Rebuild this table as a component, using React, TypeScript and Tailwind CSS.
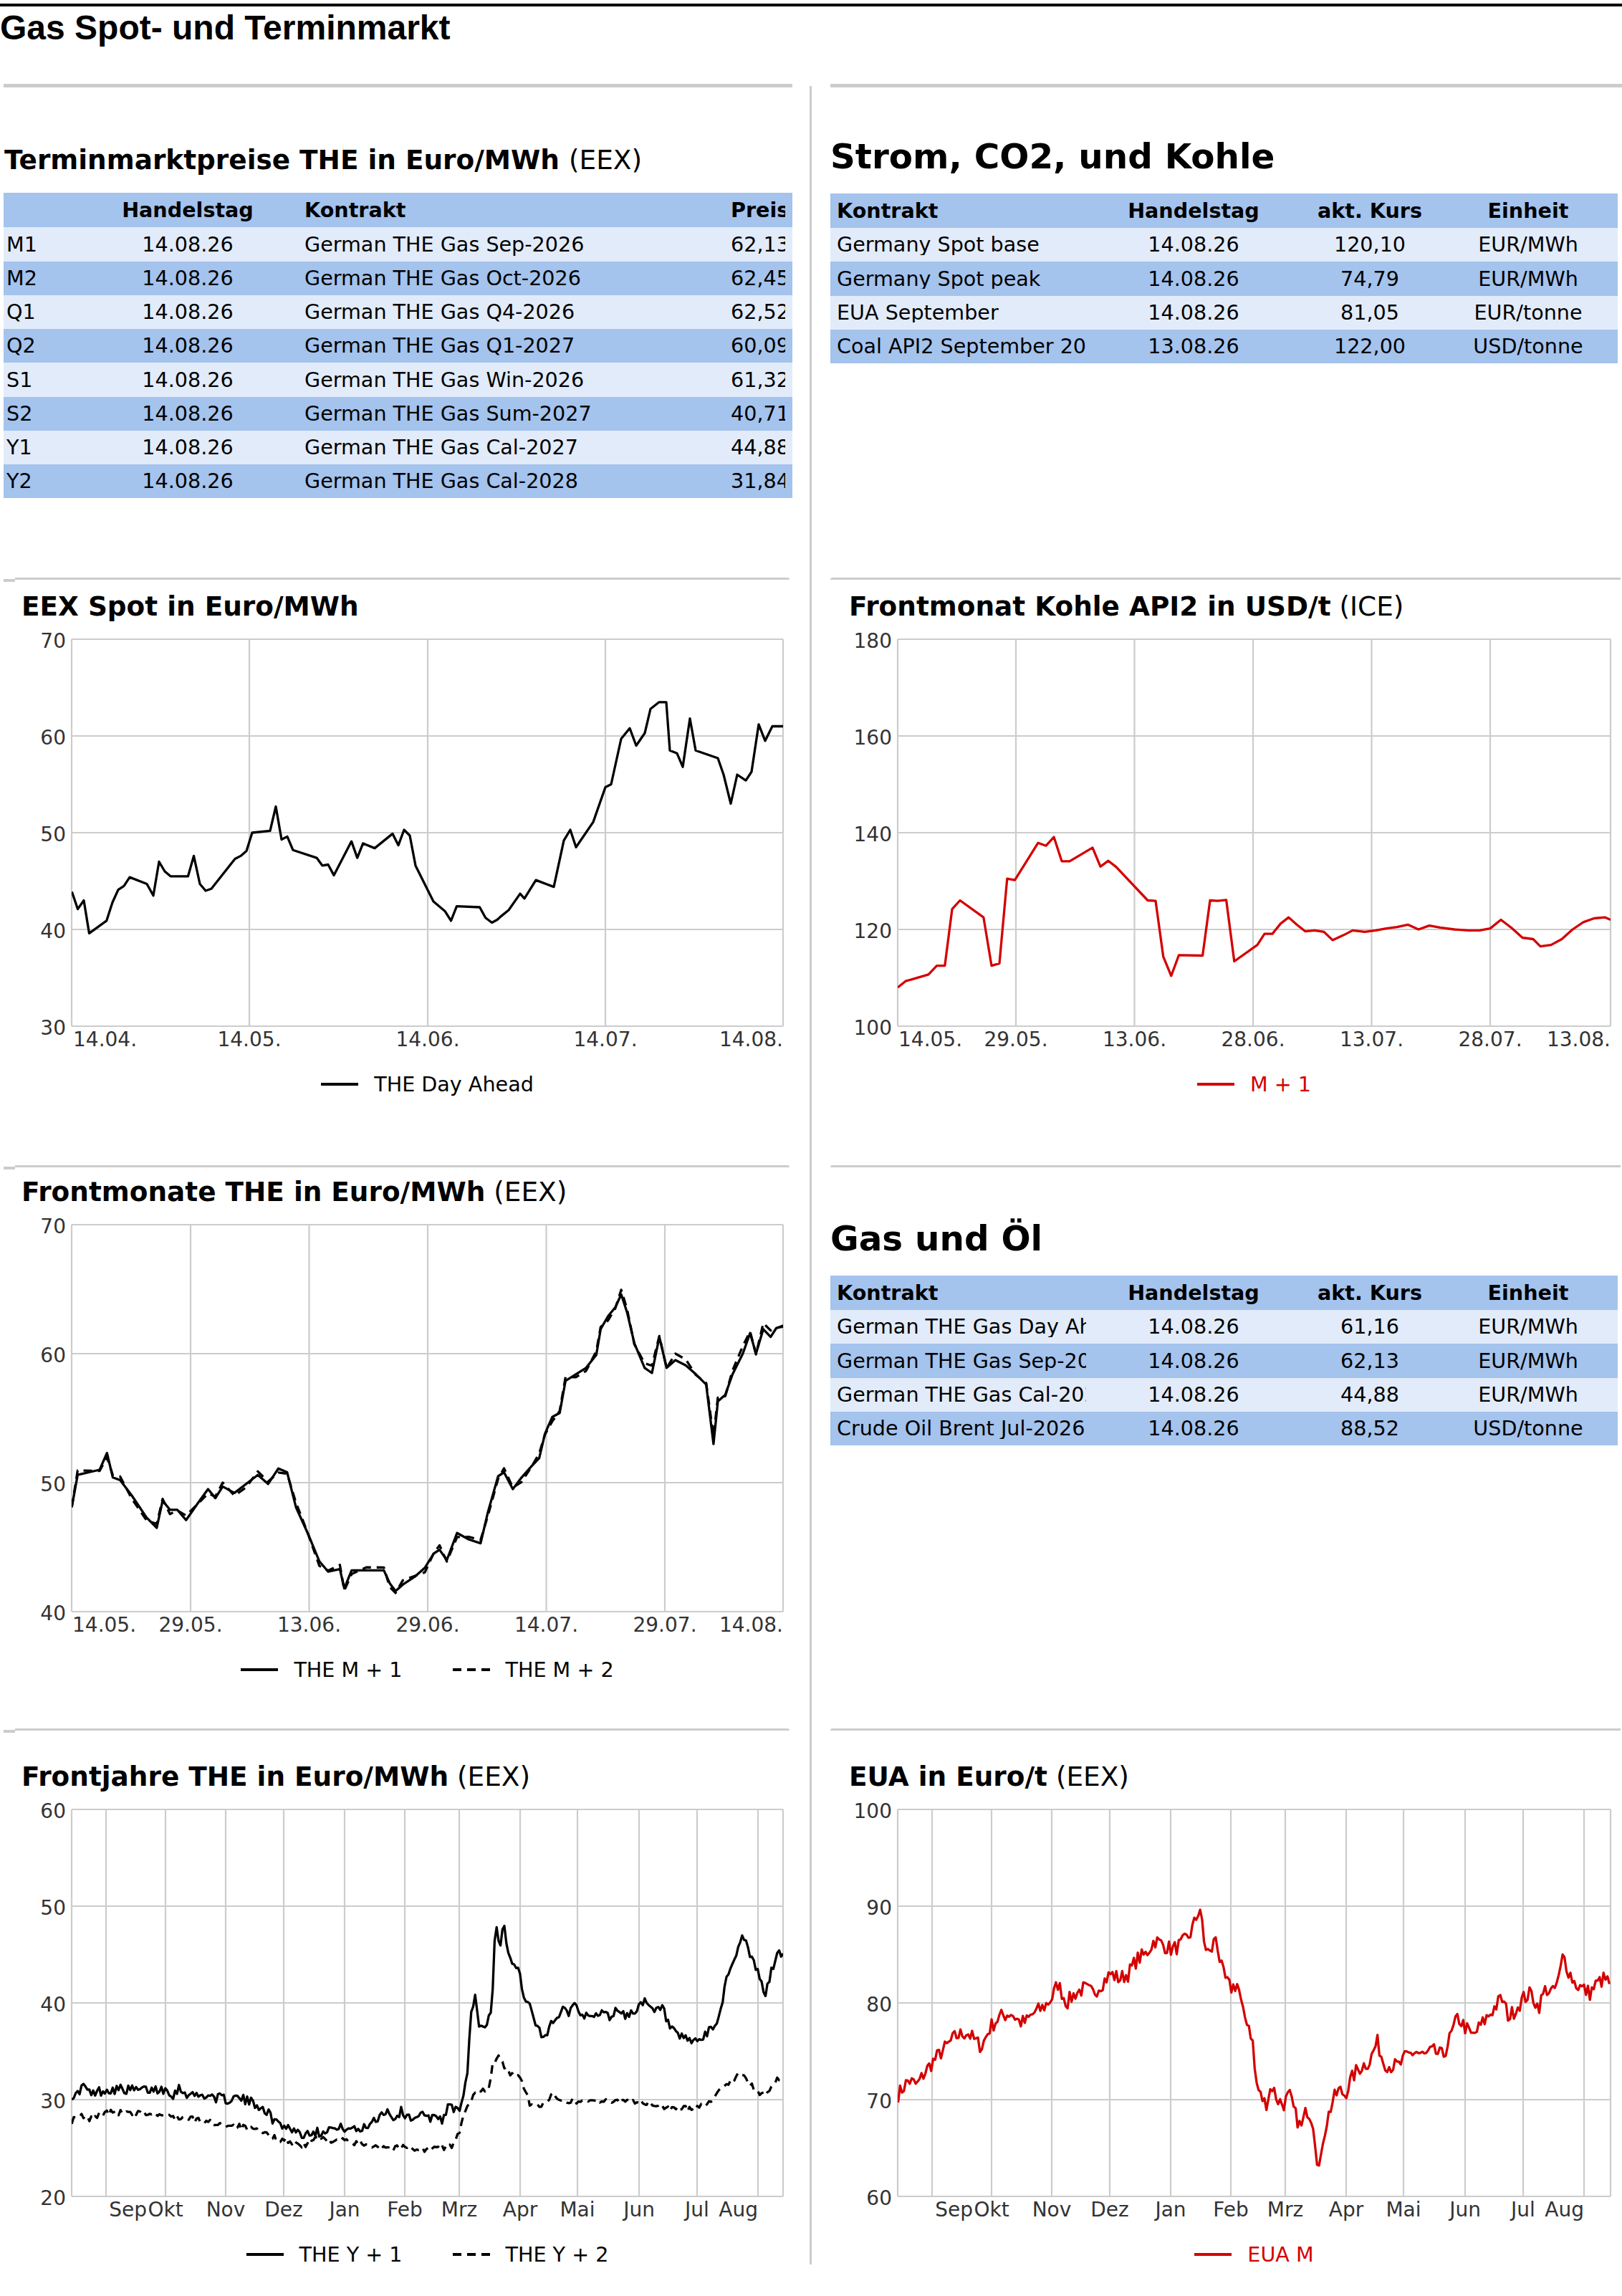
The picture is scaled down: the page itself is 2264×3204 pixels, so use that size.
import React from 'react'

type Pt = [number, number]
type Series = { pts: Pt[]; color: string; dash?: string }
type Label = { x: number; t: string; a: 'start' | 'middle' | 'end' }

const RED = '#d40000'
const S = 2.045 // reading scale of the source sketch

const fromSketch = (arr: Pt[]): Pt[] => arr.map(([x, v]) => [x * S, v])

// interpolate key points to daily values and add a bit of deterministic noise
function dense(keys: Pt[], step: number, amp: number, seed: number): Pt[] {
  let s = seed
  const rnd = () => {
    s = (s * 16807) % 2147483647
    return s / 2147483647 - 0.5
  }
  const out: Pt[] = []
  const x0 = keys[0][0]
  const x1 = keys[keys.length - 1][0]
  let i = 0
  for (let x = x0; x <= x1 + 0.01; x += step) {
    while (i < keys.length - 2 && keys[i + 1][0] < x) i++
    const [ax, av] = keys[i]
    const [bx, bv] = keys[i + 1]
    const t = Math.min(1, Math.max(0, (x - ax) / (bx - ax)))
    out.push([x, av + (bv - av) * t + rnd() * amp])
  }
  return out
}

const spot: Pt[] = [
  [100.4, 43.9], [108.5, 42.1], [117, 43.0], [124.5, 39.6], [148.7, 40.9], [157, 42.8], [165, 44.1], [173, 44.5],
  [181, 45.4], [205, 44.7], [214, 43.5], [222, 47.0], [230, 46.0], [238, 45.5], [262.5, 45.5], [270.5, 47.6],
  [279, 44.7], [287, 44.0], [295, 44.2], [328, 47.3], [336, 47.6], [344, 48.1], [352, 50.0], [377, 50.2],
  [385, 52.7], [393, 49.3], [401, 49.6], [409, 48.2], [442, 47.4], [450, 46.6], [458, 46.7], [466, 45.6],
  [490.6, 49.1], [498.7, 47.4], [506.7, 48.9], [523, 48.4], [548, 49.9], [556, 48.7], [564, 50.3], [572, 49.7],
  [580, 46.6], [605, 42.9], [621, 41.9], [629.5, 40.9], [637.5, 42.4], [669.6, 42.3], [677.7, 41.2], [686.6, 40.7],
  [694, 41.0], [700, 41.4], [710, 42.0], [726, 43.7], [732, 43.2], [748, 45.1], [773, 44.4], [787, 49.2],
  [796, 50.3], [804, 48.5], [828, 51.1], [845, 54.7], [853, 55.0], [867, 59.7], [879, 60.8], [888, 59.0],
  [900, 60.3], [908, 62.8], [920, 63.5], [930, 63.5], [935, 58.5], [945, 58.2], [953, 56.8], [963, 61.8],
  [971, 58.5], [1002, 57.7], [1010, 56.0], [1020, 53.0], [1029, 56.0], [1041, 55.4], [1049, 56.3], [1059, 61.2],
  [1068, 59.5], [1078, 61.0], [1093, 61.0],
]

const coal: Pt[] = [
  [1253, 108.0], [1264, 109.3], [1296, 110.7], [1307.6, 112.5], [1318.8, 112.5], [1329, 124.2], [1340, 126.0],
  [1372.8, 122.5], [1384, 112.5], [1395, 113.0], [1405.8, 130.5], [1416.5, 130.2], [1449, 137.9], [1460, 137.3],
  [1471, 139.1], [1482, 134.1], [1493, 134.1], [1525, 136.9], [1536, 133.0], [1547, 134.2], [1558, 132.9],
  [1602, 126.0], [1613, 125.9], [1623.7, 114.4], [1634.8, 110.4], [1645.5, 114.7], [1678.6, 114.6], [1689, 126.0],
  [1700, 125.9], [1711.6, 126.1], [1722.8, 113.4], [1755, 116.8], [1765, 119.1], [1776, 119.1], [1787.5, 121.2],
  [1798.7, 122.5], [1810, 121.0], [1822, 119.6], [1835, 119.8], [1848, 119.5], [1860, 117.8], [1875, 118.8],
  [1888, 119.8], [1905, 119.5], [1920, 119.8], [1935, 120.2], [1950, 120.5], [1965, 121.0], [1980, 120.0],
  [1995, 120.8], [2010, 120.4], [2030, 120.0], [2050, 119.8], [2065, 119.8], [2080, 120.2], [2095, 122.0],
  [2110, 120.3], [2125, 118.3], [2140, 118.0], [2150, 116.5], [2165, 116.8], [2180, 118.0], [2195, 120.0],
  [2210, 121.5], [2225, 122.3], [2240, 122.5], [2248, 122.0],
]

const m1: Pt[] = fromSketch([
  [49, 48.1], [53, 50.6], [68, 51.0], [73, 52.3], [77, 50.4], [82, 50.2], [90, 49.0], [100, 47.3], [107, 46.5],
  [111, 48.6], [116, 47.9], [121, 47.9], [127, 47.1], [135, 48.4], [142, 49.5], [147, 48.8], [152, 49.7],
  [160, 49.2], [168, 49.9], [176, 50.6], [183, 49.9], [190, 51.1], [196, 50.8], [202, 48.1], [210, 46.1],
  [218, 43.9], [224, 43.1], [232, 43.3], [235, 41.8], [240, 43.2], [250, 43.2], [262, 43.2], [266, 42.2],
  [270, 41.6], [275, 42.1], [283, 42.7], [290, 43.4], [296, 44.5], [300, 44.8], [305, 44.0], [312, 46.1],
  [320, 45.6], [328, 45.3], [333, 47.7], [340, 50.5], [344, 50.8], [350, 49.5], [356, 50.4], [363, 51.3],
  [368, 51.9], [372, 53.8], [377, 55.1], [382, 55.4], [386, 57.9], [393, 58.4], [400, 58.9], [407, 59.9],
  [410, 61.9], [415, 62.9], [420, 63.6], [424, 64.6], [428, 63.2], [433, 60.8], [440, 58.9], [445, 58.5],
  [450, 61.3], [455, 58.9], [461, 59.5], [468, 59.1], [475, 58.4], [482, 57.6], [487, 53.0], [490, 56.3],
  [495, 56.8], [500, 58.4], [507, 60.0], [512, 61.6], [516, 60.0], [521, 61.9], [526, 61.3], [530, 62.0],
  [534.5, 62.1],
])
const m2: Pt[] = m1.map(([x, v], i) => [x, v + 0.35 * Math.sin(i * 1.7) + (i > 60 ? 0.25 : 0)])

const y1 = dense(fromSketch([
  [49, 30.5], [52, 30.3], [55, 31.2], [58, 31.4], [62, 30.4], [65, 30.8], [72, 31.0], [80, 31.1], [90, 31.0],
  [100, 31.0], [110, 31.1], [115, 31.0], [118, 30.5], [122, 31.2], [128, 30.6], [135, 30.4], [140, 30.5],
  [148, 30.2], [155, 30.0], [162, 30.2], [170, 29.8], [176, 29.5], [181, 29.0], [186, 28.0], [190, 27.6],
  [196, 27.2], [202, 26.8], [207, 26.3], [212, 26.8], [218, 26.6], [224, 27.1], [230, 26.9], [236, 27.2],
  [242, 26.8], [248, 27.0], [254, 27.8], [258, 28.2], [264, 29.0], [268, 28.0], [274, 28.8], [280, 28.1],
  [286, 28.5], [292, 28.0], [297, 28.4], [302, 28.0], [306, 29.2], [311, 29.0], [316, 29.6], [319, 33.0],
  [321, 38.0], [324, 41.0], [326, 38.5], [329, 37.0], [333, 38.0], [336, 40.0], [338, 48.5], [341, 46.0],
  [344, 47.8], [347, 45.5], [350, 44.0], [354, 43.5], [358, 40.5], [362, 39.5], [365, 38.0], [368, 37.0],
  [371, 36.0], [375, 37.5], [379, 38.0], [384, 40.0], [388, 39.0], [393, 40.2], [398, 38.5], [404, 38.5],
  [410, 39.2], [416, 38.5], [422, 39.5], [428, 38.5], [434, 39.5], [440, 40.0], [446, 39.0], [452, 39.5],
  [457, 37.5], [462, 36.5], [468, 36.2], [475, 36.0], [481, 36.5], [487, 37.5], [491, 38.5], [495, 42.0],
  [499, 44.0], [503, 45.0], [507, 47.5], [511, 45.0], [515, 44.0], [519, 42.5], [522, 40.5], [526, 43.0],
  [530, 45.0], [534.5, 45.0],
]), 2.72, 1.0, 17)

const y2 = dense(fromSketch([
  [49, 27.8], [55, 28.3], [62, 28.0], [70, 28.6], [80, 28.7], [90, 28.5], [100, 28.6], [110, 28.4], [120, 28.2],
  [130, 28.0], [140, 27.7], [150, 27.5], [160, 27.3], [170, 27.0], [180, 26.5], [188, 26.0], [196, 25.8],
  [204, 25.4], [210, 25.2], [216, 26.2], [222, 25.8], [230, 25.9], [240, 25.5], [250, 25.4], [260, 25.2],
  [270, 25.0], [280, 25.1], [290, 24.8], [300, 25.0], [308, 25.2], [312, 26.0], [316, 28.0], [320, 29.5],
  [324, 30.5], [330, 31.0], [334, 31.5], [336, 33.5], [340, 34.5], [344, 33.5], [348, 32.5], [353, 32.8],
  [358, 31.0], [362, 29.5], [366, 29.2], [372, 29.8], [378, 30.5], [385, 30.0], [395, 29.8], [405, 30.0],
  [415, 29.7], [425, 30.0], [435, 29.8], [445, 29.5], [455, 29.2], [465, 29.0], [475, 29.2], [482, 29.6],
  [488, 30.3], [494, 31.5], [500, 32.0], [505, 32.8], [510, 31.8], [515, 31.2], [520, 30.5], [525, 31.0],
  [530, 32.0], [534.5, 32.0],
]), 2.72, 0.6, 91)

const eua = dense(fromSketch([
  [613, 70.5], [620, 72], [626, 71.5], [632, 73], [640, 74.5], [646, 75.5], [652, 76.5], [660, 77], [666, 76],
  [670, 75.5], [676, 77.5], [682, 78.5], [690, 79], [696, 78], [700, 78], [706, 79], [712, 79.5], [718, 80.5],
  [722, 82], [728, 80], [734, 81], [740, 81.5], [746, 81], [752, 82], [758, 83], [764, 82.5], [770, 83],
  [776, 84.5], [782, 85], [788, 86.5], [794, 86], [800, 85.5], [806, 86], [812, 87], [816, 88.5], [819, 90],
  [822, 86], [826, 85], [830, 87], [833, 84], [836, 82.5], [840, 81.5], [845, 82], [848, 79], [852, 78],
  [855, 76], [857, 72], [860, 70.5], [864, 69.5], [868, 71.5], [872, 70], [876, 69.5], [880, 70.5], [884, 68.5],
  [888, 67], [892, 69], [896, 68], [899, 64], [901, 62.5], [903, 66], [906, 68], [910, 70], [914, 71],
  [918, 70.5], [922, 72], [926, 73], [930, 73.5], [935, 74], [940, 76], [944, 74], [948, 73.5], [955, 73.5],
  [960, 74.5], [966, 75], [972, 74.5], [978, 75], [985, 74.5], [990, 76.5], [995, 78.5], [1000, 77.5],
  [1005, 76.5], [1010, 77.5], [1015, 78.5], [1020, 79.5], [1025, 80.5], [1030, 78.5], [1035, 79.5],
  [1040, 80.5], [1045, 81], [1050, 79.5], [1055, 81.5], [1060, 81], [1064, 82.5], [1067, 85], [1070, 83.5],
  [1075, 82], [1080, 81.5], [1085, 81], [1090, 82], [1095, 82.5], [1099, 82],
]), 2.72, 1.6, 7)

const monthGrid = [148, 231, 315, 396, 481, 565, 641, 726, 806, 892, 973, 1058]
const monthLabels = (dx: number): Label[] => [
  { x: 205 + dx, t: 'Sep', a: 'end' },
  { x: 231 + dx, t: 'Okt', a: 'middle' },
  { x: 315 + dx, t: 'Nov', a: 'middle' },
  { x: 396 + dx, t: 'Dez', a: 'middle' },
  { x: 481 + dx, t: 'Jan', a: 'middle' },
  { x: 565 + dx, t: 'Feb', a: 'middle' },
  { x: 641 + dx, t: 'Mrz', a: 'middle' },
  { x: 726 + dx, t: 'Apr', a: 'middle' },
  { x: 806 + dx, t: 'Mai', a: 'middle' },
  { x: 892 + dx, t: 'Jun', a: 'middle' },
  { x: 973 + dx, t: 'Jul', a: 'middle' },
  { x: 1058 + dx, t: 'Aug', a: 'end' },
]

function Chart({
  id, x0, w, left, right, min, max, ticks, grid, labels, series,
}: {
  id: string
  x0: number
  w: number
  left: number
  right: number
  min: number
  max: number
  ticks: number[]
  grid: number[]
  labels: Label[]
  series: Series[]
}) {
  const y = (v: number) => 20 + ((max - v) / (max - min)) * 540
  return (
    <svg width={w} height={605} viewBox={`${x0} 0 ${w} 605`} className="mt-[6.3px] block">
      <defs>
        <clipPath id={id}>
          <rect x={left} y={18} width={right - left} height={544} />
        </clipPath>
      </defs>
      {ticks.map((t) => (
        <line key={`h${t}`} x1={left} x2={right} y1={y(t)} y2={y(t)} stroke="#cccccc" strokeWidth={2.2} />
      ))}
      {grid.map((g) => (
        <line key={`v${g}`} x1={g} x2={g} y1={20} y2={560} stroke="#cccccc" strokeWidth={2.2} />
      ))}
      <line x1={left} x2={left} y1={20} y2={560} stroke="#cccccc" strokeWidth={2.2} />
      <line x1={right} x2={right} y1={20} y2={560} stroke="#cccccc" strokeWidth={2.2} />
      {ticks.map((t) => (
        <text key={`t${t}`} x={left - 8} y={y(t) + 12} textAnchor="end" fontSize={28} fill="#333333">
          {t}
        </text>
      ))}
      {labels.map((l) => (
        <text key={l.t} x={l.x} y={588} textAnchor={l.a} fontSize={28} fill="#333333">
          {l.t}
        </text>
      ))}
      <g clipPath={`url(#${id})`}>
        {series.map((s, i) => (
          <polyline
            key={i}
            points={s.pts.map(([px, v]) => `${px.toFixed(1)},${y(v).toFixed(1)}`).join(' ')}
            fill="none"
            stroke={s.color}
            strokeWidth={3.3}
            strokeDasharray={s.dash}
            strokeLinejoin="round"
          />
        ))}
      </g>
    </svg>
  )
}

function ChartTitle({ bold, normal, className }: { bold: string; normal?: string; className: string }) {
  return (
    <h3 className={`whitespace-nowrap text-[37.4px] font-bold leading-none ${className}`}>
      {bold}
      {normal && <span className="font-normal"> {normal}</span>}
    </h3>
  )
}

function Legend({
  items,
  className,
}: {
  items: { label: string; color: string; dash?: boolean; red?: boolean }[]
  className: string
}) {
  return (
    <div className={`mt-[22px] flex h-[28.6px] items-center justify-center gap-[70px] text-[28.6px] leading-none ${className}`}>
      {items.map((it) => (
        <div key={it.label} className="flex items-center gap-[22px]">
          <svg width="52" height="6" className="block">
            <line x1="0" x2="52" y1="3" y2="3" stroke={it.color} strokeWidth="4" strokeDasharray={it.dash ? '12 8' : undefined} />
          </svg>
          <span className={it.red ? 'text-[#d40000]' : 'text-black'}>{it.label}</span>
        </div>
      ))}
    </div>
  )
}

function LeftRule() {
  return (
    <div className="flex h-[6px] items-start">
      <div className="mt-[2px] h-[4px] w-[16px] bg-[#cccccc]" />
      <div className="h-[3px] w-[1081px] rounded-tr-[3px] bg-[#cccccc]" />
    </div>
  )
}

function RightRule() {
  return (
    <div className="h-[6px]">
      <div className="h-[3px] w-[1103px] rounded-tl-[3px] bg-[#cccccc]" />
    </div>
  )
}

const termin = [
  ['M1', '14.08.26', 'German THE Gas Sep-2026', '62,13'],
  ['M2', '14.08.26', 'German THE Gas Oct-2026', '62,45'],
  ['Q1', '14.08.26', 'German THE Gas Q4-2026', '62,52'],
  ['Q2', '14.08.26', 'German THE Gas Q1-2027', '60,09'],
  ['S1', '14.08.26', 'German THE Gas Win-2026', '61,32'],
  ['S2', '14.08.26', 'German THE Gas Sum-2027', '40,71'],
  ['Y1', '14.08.26', 'German THE Gas Cal-2027', '44,88'],
  ['Y2', '14.08.26', 'German THE Gas Cal-2028', '31,84'],
]

const strom = [
  ['Germany Spot base', '14.08.26', '120,10', 'EUR/MWh'],
  ['Germany Spot peak', '14.08.26', '74,79', 'EUR/MWh'],
  ['EUA September', '14.08.26', '81,05', 'EUR/tonne'],
  ['Coal API2 September 2026', '13.08.26', '122,00', 'USD/tonne'],
]

const gasOel = [
  ['German THE Gas Day Ahead', '14.08.26', '61,16', 'EUR/MWh'],
  ['German THE Gas Sep-2026', '14.08.26', '62,13', 'EUR/MWh'],
  ['German THE Gas Cal-2027', '14.08.26', '44,88', 'EUR/MWh'],
  ['Crude Oil Brent Jul-2026', '14.08.26', '88,52', 'USD/tonne'],
]

function MarketTable({ rows }: { rows: string[][] }) {
  return (
    <div className="mt-[27.6px] w-[1099px] text-[28.6px] leading-none">
      <div className="grid h-[48px] grid-cols-[366px_282px_210px_241px] items-center bg-[#a4c3ed] font-bold">
        <div className="pl-[9px]">Kontrakt</div>
        <div className="text-center">Handelstag</div>
        <div className="text-center">akt. Kurs</div>
        <div className="pr-[9px] text-center">Einheit</div>
      </div>
      {rows.map((r, i) => (
        <div
          key={r[0]}
          className={`grid h-[47.25px] grid-cols-[366px_282px_210px_241px] items-center ${i % 2 === 0 ? 'bg-[#e2ebf9]' : 'bg-[#a4c3ed]'}`}
        >
          <div className="pl-[9px]">
            <div className="w-[348px] overflow-hidden whitespace-nowrap">{r[0]}</div>
          </div>
          <div className="text-center">{r[1]}</div>
          <div className="text-center">{r[2]}</div>
          <div className="pr-[9px] text-center">{r[3]}</div>
        </div>
      ))}
    </div>
  )
}

export default function App() {
  return (
    <div className="min-h-[3204px] w-[2264px] bg-white font-['DejaVu_Sans',sans-serif] text-black">
      <div className="pt-[5px]">
        <div className="h-[4px] bg-black" />
      </div>
      <h1 className="mt-[6px] font-['Liberation_Sans',Arial,sans-serif] text-[48px] font-bold leading-none">
        Gas Spot- und Terminmarkt
      </h1>

      <div className="mt-[54px] flex">
        {/* left column */}
        <div className="w-[1130px] shrink-0 pl-[5px]">
          <section className="h-[689px]">
            <div className="h-[5px] w-[1101px] bg-[#cccccc]" />
            <h3 className="mt-[83px] pl-[1px] text-[37.4px] font-bold leading-none">
              Terminmarktpreise THE in Euro/MWh <span className="font-normal">(EEX)</span>
            </h3>
            <div className="mt-[27px] w-[1101px] text-[28.6px] leading-none">
              <div className="grid h-[48px] grid-cols-[155px_204px_651px_91px] items-center bg-[#a4c3ed] font-bold">
                <div />
                <div className="text-center">Handelstag</div>
                <div className="pl-[61px]">Kontrakt</div>
                <div className="pl-[5px]">
                  <div className="w-[76px] overflow-hidden whitespace-nowrap">Preis</div>
                </div>
              </div>
              {termin.map((r, i) => (
                <div
                  key={r[0]}
                  className={`grid h-[47.25px] grid-cols-[155px_204px_651px_91px] items-center ${i % 2 === 0 ? 'bg-[#e2ebf9]' : 'bg-[#a4c3ed]'}`}
                >
                  <div className="pl-[4px]">{r[0]}</div>
                  <div className="text-center">{r[1]}</div>
                  <div className="pl-[61px] whitespace-nowrap">{r[2]}</div>
                  <div className="pl-[5px]">
                    <div className="w-[76px] overflow-hidden whitespace-nowrap">{r[3]}</div>
                  </div>
                </div>
              ))}
            </div>
          </section>

          <section className="h-[820px]">
            <LeftRule />
            <ChartTitle className="mt-[16px] pl-[25px]" bold="EEX Spot in Euro/MWh" />
            <Chart
              id="spot"
              x0={5}
              w={1101}
              left={100}
              right={1093}
              min={30}
              max={70}
              ticks={[30, 40, 50, 60, 70]}
              grid={[348, 597, 845]}
              labels={[
                { x: 102, t: '14.04.', a: 'start' },
                { x: 348, t: '14.05.', a: 'middle' },
                { x: 597, t: '14.06.', a: 'middle' },
                { x: 845, t: '14.07.', a: 'middle' },
                { x: 1093, t: '14.08.', a: 'end' },
              ]}
              series={[{ pts: spot, color: '#000000' }]}
            />
            <Legend className="ml-[95px] w-[993px]" items={[{ label: 'THE Day Ahead', color: '#000000' }]} />
          </section>

          <section className="h-[786px]">
            <LeftRule />
            <ChartTitle className="mt-[13px] pl-[25px]" bold="Frontmonate THE in Euro/MWh" normal="(EEX)" />
            <Chart
              id="front"
              x0={5}
              w={1101}
              left={100}
              right={1093}
              min={40}
              max={70}
              ticks={[40, 50, 60, 70]}
              grid={[266, 431.5, 597, 762.5, 928]}
              labels={[
                { x: 101, t: '14.05.', a: 'start' },
                { x: 266, t: '29.05.', a: 'middle' },
                { x: 431.5, t: '13.06.', a: 'middle' },
                { x: 597, t: '29.06.', a: 'middle' },
                { x: 762.5, t: '14.07.', a: 'middle' },
                { x: 928, t: '29.07.', a: 'middle' },
                { x: 1093, t: '14.08.', a: 'end' },
              ]}
              series={[
                { pts: m2, color: '#000000', dash: '12 8' },
                { pts: m1, color: '#000000' },
              ]}
            />
            <Legend
              className="ml-[95px] w-[993px]"
              items={[
                { label: 'THE M + 1', color: '#000000' },
                { label: 'THE M + 2', color: '#000000', dash: true },
              ]}
            />
          </section>

          <section>
            <LeftRule />
            <ChartTitle className="mt-[43px] pl-[25px]" bold="Frontjahre THE in Euro/MWh" normal="(EEX)" />
            <Chart
              id="years"
              x0={5}
              w={1101}
              left={100}
              right={1093}
              min={20}
              max={60}
              ticks={[20, 30, 40, 50, 60]}
              grid={monthGrid}
              labels={monthLabels(0)}
              series={[
                { pts: y2, color: '#000000', dash: '12 8' },
                { pts: y1, color: '#000000' },
              ]}
            />
            <Legend
              className="ml-[95px] w-[993px]"
              items={[
                { label: 'THE Y + 1', color: '#000000' },
                { label: 'THE Y + 2', color: '#000000', dash: true },
              ]}
            />
          </section>
        </div>

        {/* divider */}
        <div className="mt-[3px] w-[3px] shrink-0 self-stretch bg-[#cccccc]" />

        {/* right column */}
        <div className="flex-1 pl-[26px]">
          <section className="h-[689px]">
            <div className="h-[5px] bg-[#cccccc]" />
            <h2 className="mt-[72px] text-[48.4px] font-bold leading-none">Strom, CO2, und Kohle</h2>
            <MarketTable rows={strom} />
          </section>

          <section className="h-[820px]">
            <RightRule />
            <ChartTitle className="mt-[16px] pl-[26px]" bold="Frontmonat Kohle API2 in USD/t" normal="(ICE)" />
            <Chart
              id="coal"
              x0={1159}
              w={1105}
              left={1253}
              right={2248}
              min={100}
              max={180}
              ticks={[100, 120, 140, 160, 180]}
              grid={[1418, 1583.5, 1749, 1914.5, 2080]}
              labels={[
                { x: 1254, t: '14.05.', a: 'start' },
                { x: 1418, t: '29.05.', a: 'middle' },
                { x: 1583.5, t: '13.06.', a: 'middle' },
                { x: 1749, t: '28.06.', a: 'middle' },
                { x: 1914.5, t: '13.07.', a: 'middle' },
                { x: 2080, t: '28.07.', a: 'middle' },
                { x: 2248, t: '13.08.', a: 'end' },
              ]}
              series={[{ pts: coal, color: RED }]}
            />
            <Legend className="ml-[94px] w-[995px]" items={[{ label: 'M + 1', color: RED, red: true }]} />
          </section>

          <section className="h-[786px]">
            <RightRule />
            <h2 className="mt-[72px] text-[48.4px] font-bold leading-none">Gas und Öl</h2>
            <MarketTable rows={gasOel} />
          </section>

          <section>
            <RightRule />
            <ChartTitle className="mt-[43px] pl-[26px]" bold="EUA in Euro/t" normal="(EEX)" />
            <Chart
              id="eua"
              x0={1159}
              w={1105}
              left={1253}
              right={2248}
              min={60}
              max={100}
              ticks={[60, 70, 80, 90, 100]}
              grid={monthGrid.map((g) => g + 1153)}
              labels={monthLabels(1153)}
              series={[{ pts: eua, color: RED }]}
            />
            <Legend className="ml-[94px] w-[995px]" items={[{ label: 'EUA M', color: RED, red: true }]} />
          </section>
        </div>
      </div>
    </div>
  )
}
